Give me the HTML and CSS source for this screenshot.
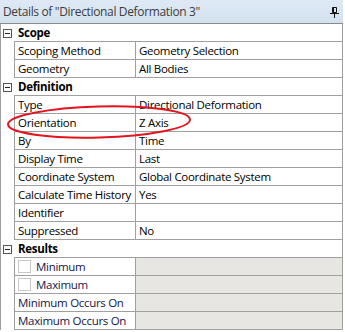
FILE: index.html
```html
<!DOCTYPE html>
<html lang="en">
<head>
  <meta charset="UTF-8" />
  <title>Details of "Directional Deformation 3"</title>
  <link rel="stylesheet" href="styles.css">
</head>
<body>

  <div class="panel">
    <div class="title">
      <span>Details of "Directional Deformation 3"</span>
      <svg class="pin" width="9" height="11" viewBox="0 0 9 11">
        <path d="M2.5 0.5h4v5h-4z M3.5 0.5v5" fill="none" stroke="#111" stroke-width="1"/>
        <path d="M0 6.5h9 M4.5 6.5v4.5" fill="none" stroke="#111" stroke-width="1"/>
      </svg>
    </div>

    <div class="grid">
      <div class="row head"><div class="gut"><span class="toggle"></span></div><div class="cells">Scope</div></div>
      <div class="row"><div class="gut"></div><div class="cells"><div class="name">Scoping Method</div><div class="value">Geometry Selection</div></div></div>
      <div class="row"><div class="gut"></div><div class="cells"><div class="name">Geometry</div><div class="value">All Bodies</div></div></div>

      <div class="row head"><div class="gut"><span class="toggle"></span></div><div class="cells">Definition</div></div>
      <div class="row"><div class="gut"></div><div class="cells"><div class="name">Type</div><div class="value">Directional Deformation</div></div></div>
      <div class="row"><div class="gut"></div><div class="cells"><div class="name">Orientation</div><div class="value">Z Axis</div></div></div>
      <div class="row"><div class="gut"></div><div class="cells"><div class="name">By</div><div class="value">Time</div></div></div>
      <div class="row"><div class="gut"></div><div class="cells"><div class="name">Display Time</div><div class="value">Last</div></div></div>
      <div class="row"><div class="gut"></div><div class="cells"><div class="name">Coordinate System</div><div class="value">Global Coordinate System</div></div></div>
      <div class="row"><div class="gut"></div><div class="cells"><div class="name">Calculate Time History</div><div class="value">Yes</div></div></div>
      <div class="row"><div class="gut"></div><div class="cells"><div class="name">Identifier</div><div class="value"></div></div></div>
      <div class="row"><div class="gut"></div><div class="cells"><div class="name">Suppressed</div><div class="value">No</div></div></div>

      <div class="row head"><div class="gut"><span class="toggle"></span></div><div class="cells">Results</div></div>
      <div class="row res"><div class="gut"></div><div class="cells"><div class="name"><span class="check"></span>Minimum</div><div class="value"></div></div></div>
      <div class="row res"><div class="gut"></div><div class="cells"><div class="name"><span class="check"></span>Maximum</div><div class="value"></div></div></div>
      <div class="row res"><div class="gut"></div><div class="cells"><div class="name">Minimum Occurs On</div><div class="value"></div></div></div>
      <div class="row res"><div class="gut"></div><div class="cells"><div class="name">Maximum Occurs On</div><div class="value"></div></div></div>
    </div>

    <!-- red mark around the Orientation row -->
    <svg class="mark" width="200" height="40" viewBox="0 0 200 40">
      <ellipse cx="99" cy="20" rx="91" ry="15.5" fill="none" stroke="#e3141e" stroke-width="2" transform="rotate(-1.5 99 20)"/>
    </svg>
  </div>

</body>
</html>
```

FILE: styles.css
```css
body {
  margin: 0;
  background: white;
  font-family: "Open Sans", "Noto Sans", sans-serif;
  font-size: 11.5px;
  letter-spacing: -0.3px;
  color: #000;
}
.panel {
  position: relative;
  width: 343px;
}
.title {
  height: 23px;
  display: flex;
  align-items: center;
  justify-content: space-between;
  padding: 0 4px 0 3px;
  background: linear-gradient(#dfe9f5, #d3e1ef);
  border-bottom: 1px solid #8a8a8a;
  color: #3c3c3c;
  font-size: 12px;
  letter-spacing: -0.35px;
}
.pin {
  margin-top: 1px;
}
.grid {
  border-left: 1px solid #a0a0a0;
  border-right: 1px solid #a0a0a0;
}
.row {
  display: flex;
  height: 18px;
}
.gut {
  width: 13px;
  display: flex;
  align-items: center;
  justify-content: center;
}
.toggle {
  width: 7px;
  height: 7px;
  border: 1px solid #555;
  position: relative;
}
.toggle::after {
  content: "";
  position: absolute;
  left: 1px;
  top: 3px;
  width: 5px;
  height: 1px;
  background: #222;
}
.cells {
  flex: 1;
  display: flex;
  align-items: center;
  border-bottom: 1px solid #a0a0a0;
  border-left: 1px solid #a0a0a0;
}
.head .cells {
  border-left: none;
  padding-left: 4px;
  font-weight: bold;
}
.name {
  width: 117px;
  height: 100%;
  display: flex;
  align-items: center;
  padding-left: 3px;
  border-right: 1px solid #a0a0a0;
  white-space: nowrap;
}
.value {
  flex: 1;
  height: 100%;
  display: flex;
  align-items: center;
  padding-left: 3px;
}
.res .name {
  color: #14144a;
}
.res .value {
  background: #e7e6e2;
}
.check {
  width: 11px;
  height: 11px;
  border: 1px solid #c8c8c8;
  margin-right: 5px;
  background: white;
}
.mark {
  position: absolute;
  left: 0;
  top: 102px;
}
```
